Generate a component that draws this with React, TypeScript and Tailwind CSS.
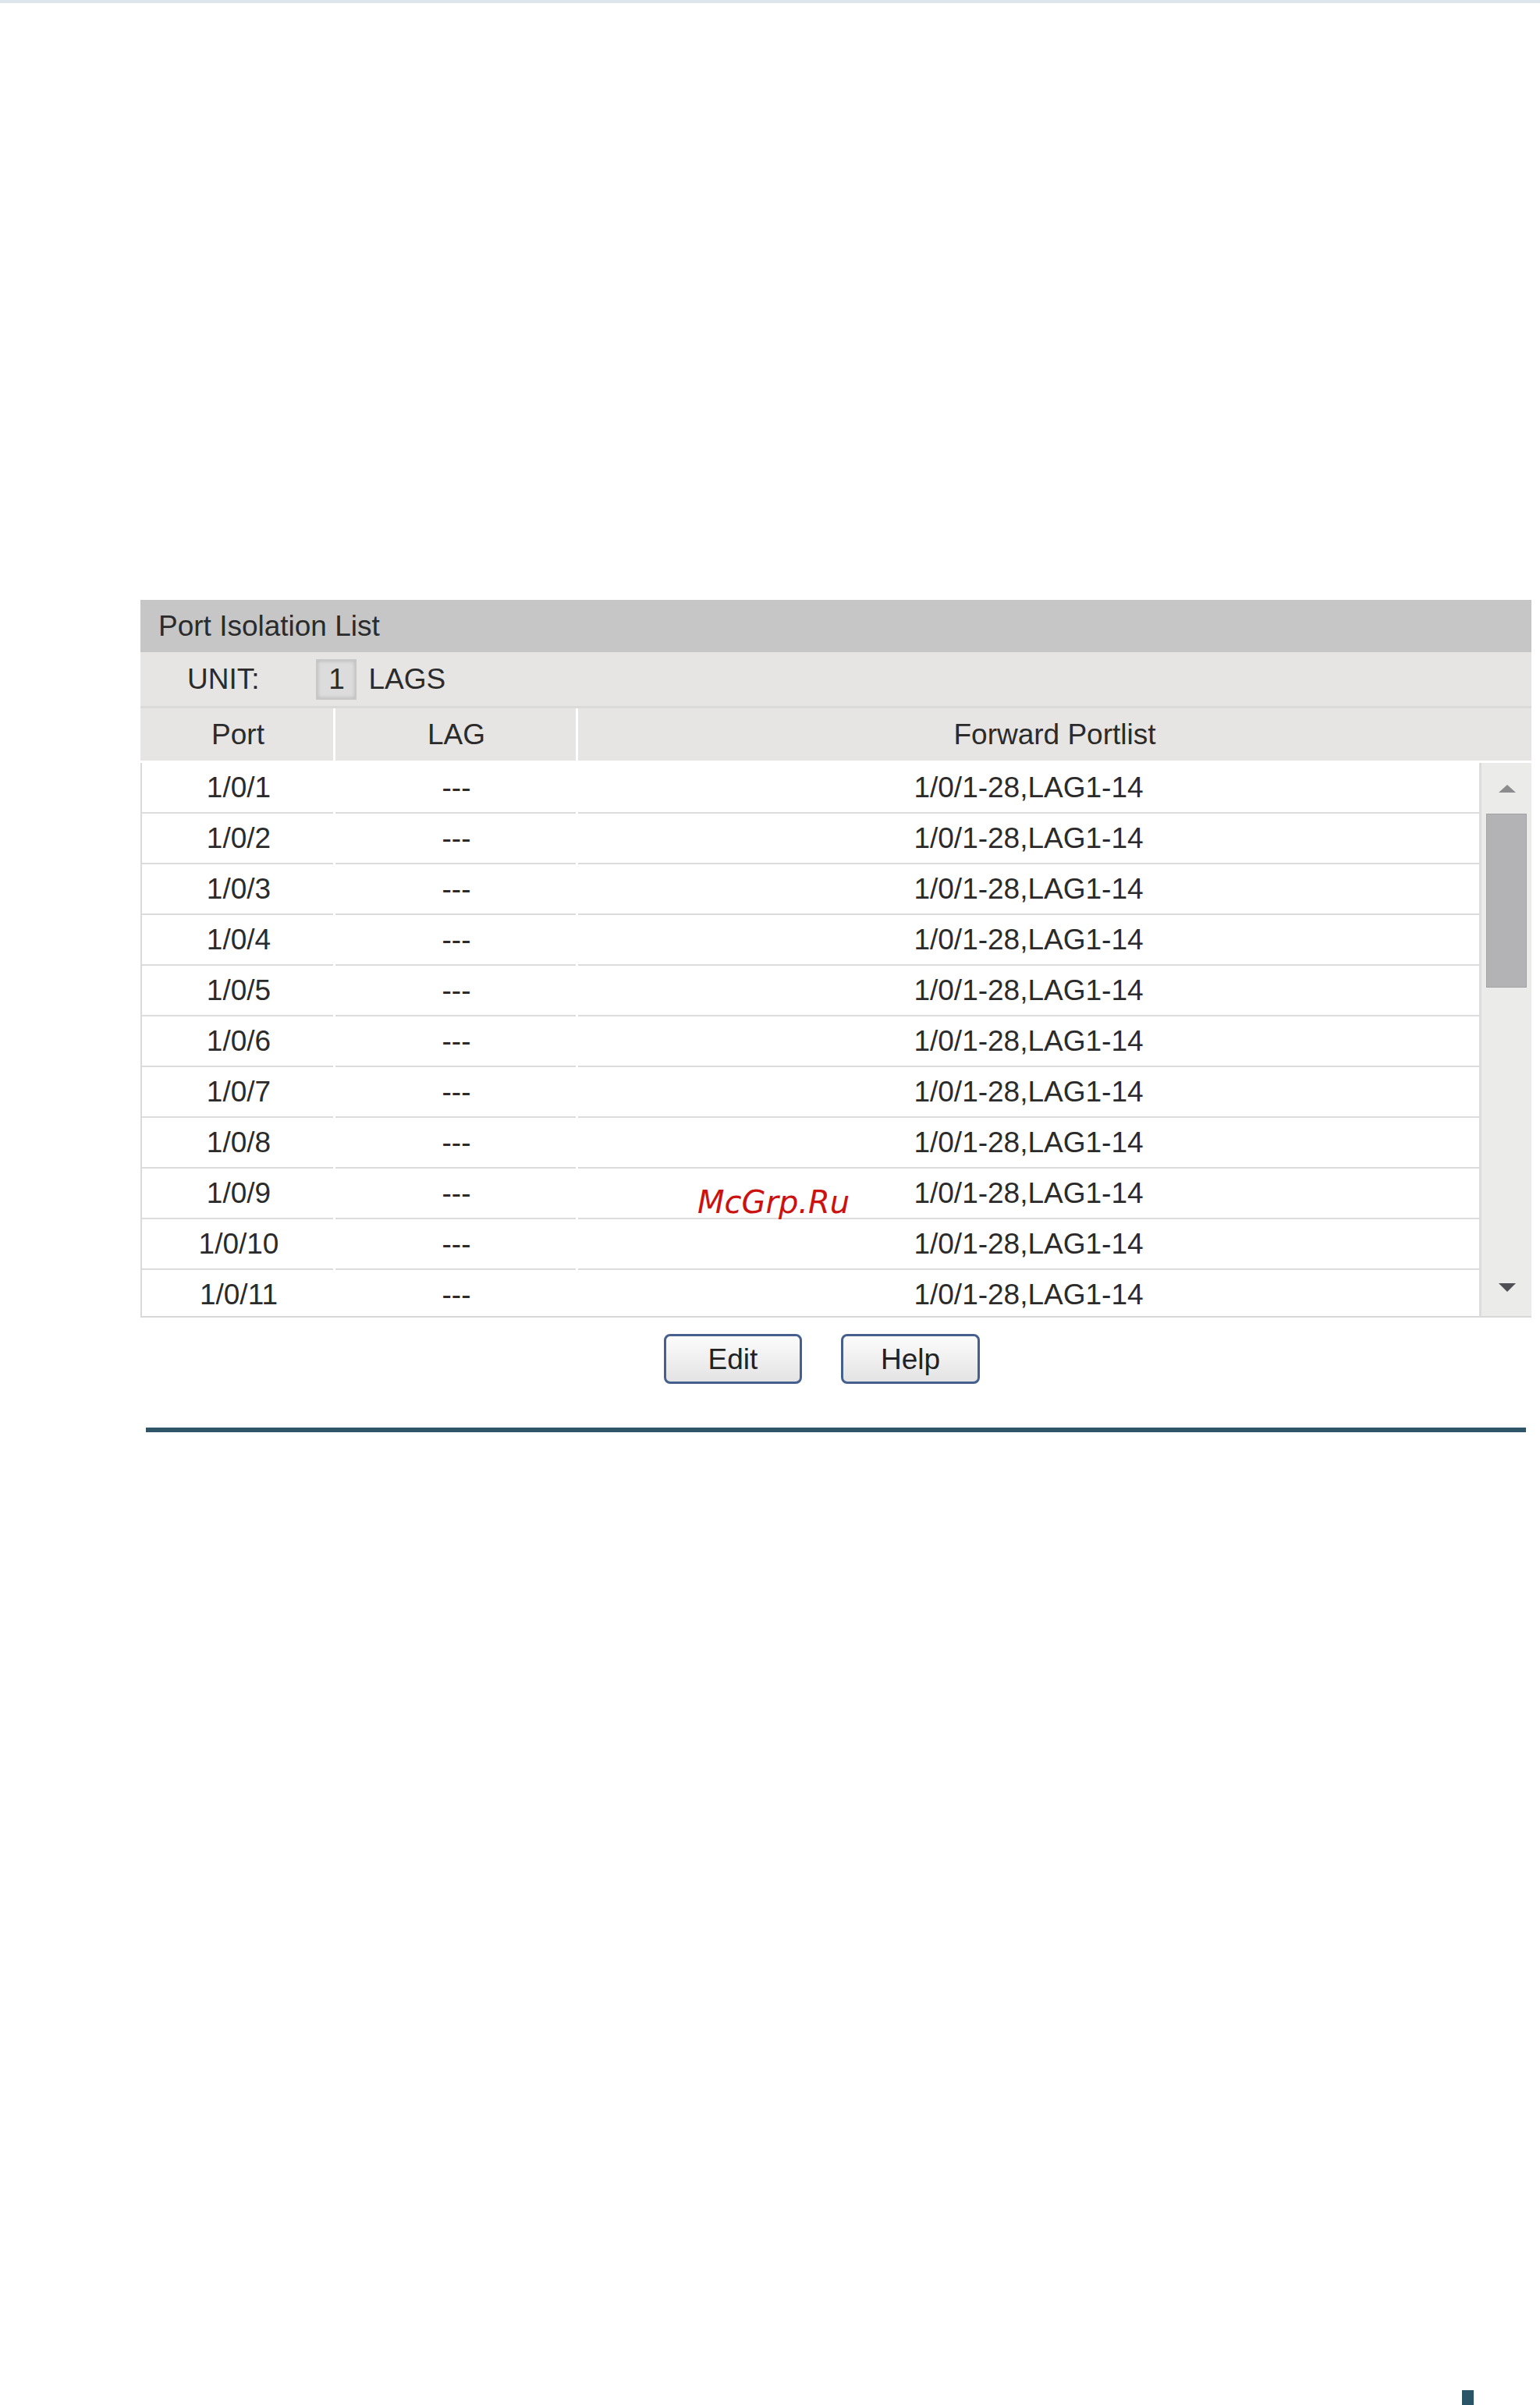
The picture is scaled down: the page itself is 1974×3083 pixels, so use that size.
import React from "react";

const rows = Array.from({ length: 11 }, (_, i) => `1/0/${i + 1}`);

export default function App() {
  return (
    <div
      className="relative w-[1974px] h-[3083px] bg-white flex flex-col text-[#2b2b2b]"
      style={{ fontFamily: '"Liberation Sans", Arial, sans-serif' }}
    >
      <div className="h-[4px] w-full bg-[#dce6ec]" />

      <div className="pt-[765px] pl-[180px]">
        <div className="w-[1783px] text-[37px] leading-none">
          {/* Title */}
          <div className="h-[67px] bg-[#c6c6c6] flex items-center pl-[23px]">
            Port Isolation List
          </div>
          {/* Unit row */}
          <div className="h-[69px] bg-[#e6e5e3] flex items-center pl-[60px]">
            <span>UNIT:</span>
            <span className="ml-[72px] w-[52px] h-[52px] flex items-center justify-center pl-[2px] border-2 border-[#c8c8c8] bg-[#dcdcdc] shadow-[inset_0_0_5px_rgba(0,0,0,0.18)]">
              1
            </span>
            <span className="ml-[16px]">LAGS</span>
          </div>
          <div className="h-[3px] bg-[#dadad9]" />
          {/* Header */}
          <div className="h-[67px] bg-white flex gap-[3px]">
            <div className="w-[247px] bg-[#e6e5e3] flex items-center justify-center pl-[3px]">Port</div>
            <div className="w-[308px] bg-[#e6e5e3] flex items-center justify-center pl-[2px]">LAG</div>
            <div className="flex-1 bg-[#e6e5e3] flex items-center justify-center">Forward Portlist</div>
          </div>
          {/* Data area */}
          <div className="mt-[3px] h-[711px] flex border-b-2 border-[#d8d8d8]">
            <div className="w-[1716px] border-l-2 border-[#dadada] overflow-hidden">
              {rows.map((r) => (
                <div key={r} className="h-[65px] flex gap-[3px] shrink-0">
                  <div className="w-[245px] border-b-2 border-[#dcdcdc] flex items-center justify-center pl-[3px]">{r}</div>
                  <div className="w-[308px] border-b-2 border-[#dcdcdc] flex items-center justify-center pl-[2px]">---</div>
                  <div className="flex-1 border-b-2 border-[#dcdcdc] flex items-center justify-center">
                    1/0/1-28,LAG1-14
                  </div>
                </div>
              ))}
            </div>
            {/* Scrollbar */}
            <div className="w-[67px] bg-[#ebebea] border-l-[3px] border-[#dcdcdc] flex flex-col">
              <div className="h-[65px] flex items-center justify-center pl-[2px]">
                <svg width="24" height="12" viewBox="0 0 24 12">
                  <polygon points="12,1 23,11 1,11" fill="#8c8c8e" />
                </svg>
              </div>
              <div className="ml-[6px] mr-[6px] h-[223px] bg-[#b3b3b5] border border-[#a2a2a4]" />
              <div className="flex-1 flex items-end justify-center pb-[30px] pl-[2px]">
                <svg width="24" height="13" viewBox="0 0 24 13">
                  <polygon points="1,1 23,1 12,12" fill="#505056" />
                </svg>
              </div>
            </div>
          </div>
          {/* Buttons */}
          <div className="mt-[21px] flex justify-center gap-[50px] pr-[36px]">
            <button className="w-[177px] h-[64px] border-[3px] border-[#455f8e] rounded-[8px] bg-linear-to-b from-[#fcfcfc] to-[#e3e3e3] text-[37px] text-[#222] leading-none flex items-center justify-center">
              Edit
            </button>
            <button className="w-[178px] h-[64px] border-[3px] border-[#455f8e] rounded-[8px] bg-linear-to-b from-[#fcfcfc] to-[#e3e3e3] text-[37px] text-[#222] leading-none flex items-center justify-center">
              Help
            </button>
          </div>
        </div>
      </div>

      {/* Divider */}
      <div className="mt-[56px] ml-[187px] w-[1769px] h-[6px] bg-[#2f5668]" />

      <div className="mt-auto flex justify-end pr-[85px]">
        <div className="w-[15px] h-[19px] bg-[#2a5468]" />
      </div>

      {/* Watermark */}
      <div
        className="absolute left-[894px] top-[1521px] text-[40px] leading-[40px] italic text-[#cc1111]"
        style={{ fontFamily: '"DejaVu Sans", sans-serif' }}
      >
        McGrp.Ru
      </div>
    </div>
  );
}
